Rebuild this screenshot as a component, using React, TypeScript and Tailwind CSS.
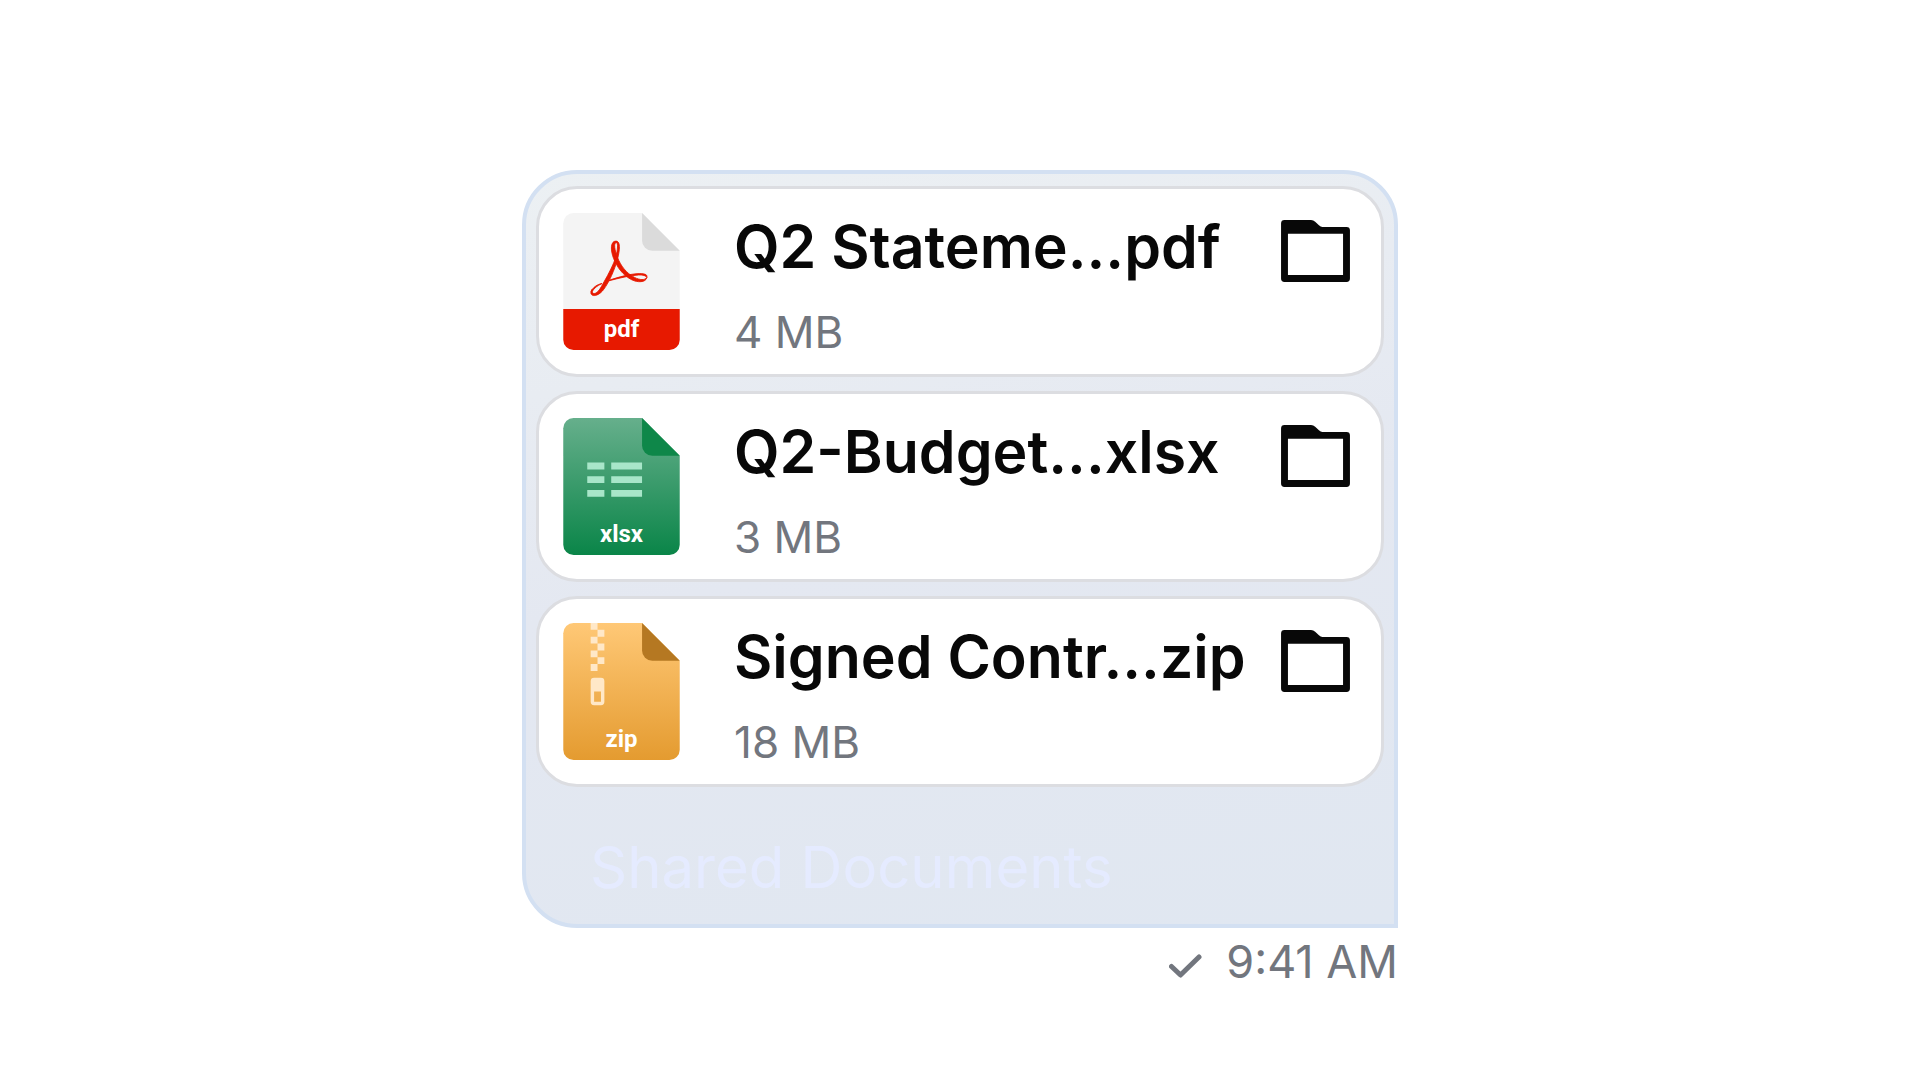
import { ReactNode } from "react";

type FileType = "pdf" | "xlsx" | "zip";

interface SharedFile {
  name: string;
  size: string;
  type: FileType;
}

const files: SharedFile[] = [
  { name: "Q2 Stateme...pdf", size: "4 MB", type: "pdf" },
  { name: "Q2-Budget...xlsx", size: "3 MB", type: "xlsx" },
  { name: "Signed Contr...zip", size: "18 MB", type: "zip" }
];

const PAGE = "M3 0H23L34 11V37A3 3 0 0 1 31 40H3A3 3 0 0 1 0 37V3A3 3 0 0 1 3 0Z";

function FileBase({
  type,
  fill,
  fold,
  children
}: {
  type: FileType;
  fill: string;
  fold: string;
  children: ReactNode;
}) {
  return (
    <svg viewBox="0 0 34 40" className="h-[137px] w-[117px] shrink-0">
      <path d={PAGE} fill={fill} />
      {children}
      <path d="M23 0L34 11H26A3 3 0 0 1 23 8Z" fill={fold} />
      <text
        x="17"
        y="36.2"
        textAnchor="middle"
        fill="#fff"
        className="font-['Roboto',sans-serif] text-[7px] font-bold"
      >
        {type}
      </text>
    </svg>
  );
}

function PdfIcon() {
  return (
    <FileBase type="pdf" fill="#f4f4f4" fold="#dbdbdb">
      <path d="M0 28H34V37A3 3 0 0 1 31 40H3A3 3 0 0 1 0 37Z" fill="#e71900" />
      <g fill="#e71900" stroke="#e71900" strokeWidth="0.25">
        <path d="M15.4 8.2C13.8 8.2 13.7 10.7 14.7 13.3C15.7 15.8 17.4 18.2 20 19.5C21.6 20.3 24.1 20.4 24.4 18.8C23.9 19.7 22.3 19.6 20.8 18.8C18.4 17.6 16.7 15.3 15.8 12.9C15 10.8 14.7 8.9 15.4 8.6Z" />
        <path d="M15.4 8.2C16.7 8.2 16.6 10.6 15.8 13.6C15 16.5 13.4 20.2 11.8 22.3C10.8 23.7 9.5 24.2 8.8 24.1C8 23.9 7.8 23.2 8.4 22.3C8.3 23.1 8.6 23.6 9.2 23.5C10.1 23.3 10.9 22 11.9 20.1C13.3 17.7 14.7 14.9 15.3 13C16 10.3 16 8.6 15.4 8.6Z" />
        <path d="M13.4 19.6C16 18.8 19.5 17.7 22.3 17.7C23.900 17.7 24.6 18 24.4 18.8C24.1 18.3 23.3 18 22 18.1C19.500 18.2 16 19.1 13.3 19.8Z" />
        <path d="M8.1 23C8.6 21.7 10 20.8 11.3 20.6C10 21.2 9 21.9 8.4 23Z" />
      </g>
    </FileBase>
  );
}

function XlsxIcon() {
  return (
    <FileBase type="xlsx" fill="url(#xlsx-page)" fold="#0e8749">
      <defs>
        <linearGradient id="xlsx-page" x1="0" y1="0" x2="0" y2="1">
          <stop stopColor="#66af8c" />
          <stop offset="1" stopColor="#0a8548" />
        </linearGradient>
      </defs>
      <path
        d="M7 13h5v2H7zM7 17h5v2H7zM7 21h5v2H7zM14 13h9v2h-9zM14 17h9v2h-9zM14 21h9v2h-9z"
        fill="#a8e6c9"
      />
    </FileBase>
  );
}

function ZipIcon() {
  return (
    <FileBase type="zip" fill="url(#zip-page)" fold="#b57822">
      <defs>
        <linearGradient id="zip-page" x1="0" y1="0" x2="0" y2="1">
          <stop stopColor="#ffc876" />
          <stop offset="1" stopColor="#e49b30" />
        </linearGradient>
      </defs>
      <path
        d="M8 0h2v2H8zM10 2h2v2h-2zM8 4h2v2H8zM10 6h2v2h-2zM8 8h2v2H8zM10 10h2v2h-2zM8 12h2v2H8z"
        fill="#ffe8c8"
      />
      <path
        fillRule="evenodd"
        d="M9 16h2a1 1 0 0 1 1 1v6a1 1 0 0 1-1 1H9a1 1 0 0 1-1-1v-6a1 1 0 0 1 1-1ZM9 20v3h2v-3Z"
        fill="#ffe8c8"
      />
    </FileBase>
  );
}

const icons: Record<FileType, ReactNode> = {
  pdf: <PdfIcon />,
  xlsx: <XlsxIcon />,
  zip: <ZipIcon />
};

function FileCard({ file }: { file: SharedFile }) {
  return (
    <li className="flex items-start rounded-[41px] border-3 border-[#dcdde1] bg-white py-6 pr-[31px] pl-6">
      {icons[file.type]}
      <div className="ml-[54px] flex min-w-0 flex-1 flex-col">
        <span className="text-[59px] leading-[68px] font-semibold whitespace-nowrap text-[#080808]">
          {file.name}
        </span>
        <span className="mt-[33px] text-[44px] leading-[36px] text-[#72767e]">
          {file.size}
        </span>
      </div>
      <button
        type="button"
        aria-label={`Save ${file.name}`}
        className="mt-[7px] shrink-0 cursor-pointer"
      >
        <svg viewBox="0 0 20 18" className="h-[62px] w-[69px]" fill="#080808">
          <path
            fillRule="evenodd"
            d="M1 0H8.7Q9.4 0 9.9 .5L11 1.5Q11.5 2 12 2H19A1 1 0 0 1 20 3V17A1 1 0 0 1 19 18H1A1 1 0 0 1 0 17V1A1 1 0 0 1 1 0ZM2 4V16H18V4Z"
          />
        </svg>
      </button>
    </li>
  );
}

export default function App() {
  return (
    <main className="flex min-h-screen flex-col items-center bg-white pt-[170px] font-['Inter',sans-serif]">
      <article className="flex w-full max-w-[876px] flex-col items-end">
        <div className="w-full rounded-[55px] rounded-br-none border-4 border-[#d3e0f2] bg-linear-170 from-[#ecf0f3] via-[#e4e8f1] to-[#e0e7f1] px-[10px] pt-3">
          <ul className="flex flex-col gap-[14px]">
            {files.map((file) => (
              <FileCard key={file.name} file={file} />
            ))}
          </ul>
          <p className="px-[54px] pt-[46px] pb-[23px] text-[58px] leading-[68px] text-[#e5ebff]">
            Shared Documents
          </p>
        </div>
        <footer className="mt-2 flex items-center gap-6 text-[45px] leading-[52px] text-[#72767e]">
          <svg
            viewBox="0 0 33 24"
            className="mt-2 h-6 w-[33px]"
            fill="none"
            stroke="currentColor"
            strokeWidth="5"
            strokeLinecap="round"
            strokeLinejoin="round"
          >
            <path d="M2.500 12.500L11.500 21L30 3" />
          </svg>
          <time>9:41 AM</time>
        </footer>
      </article>
    </main>
  );
}
